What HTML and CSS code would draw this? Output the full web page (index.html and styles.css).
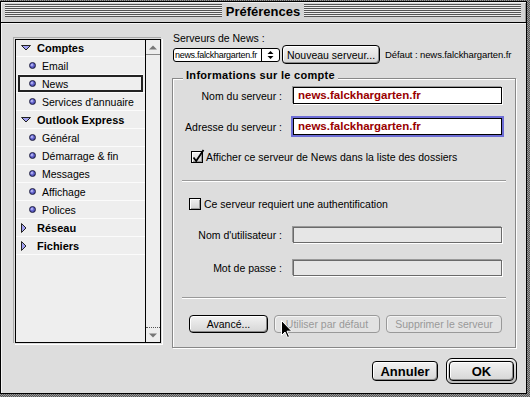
FILE: index.html
```html
<!DOCTYPE html>
<html lang="fr">
<head>
<meta charset="utf-8">
<title>Préférences</title>
<link rel="stylesheet" href="styles.css">
</head>
<body>
<div class="window">
  <div class="titlebar">
    <span class="stripes"></span>
    <span class="title">Préférences</span>
    <span class="stripes"></span>
  </div>
  <div class="content">
    <div class="main">
      <div class="list">
        <div class="items">
          <div class="items-inner">
            <div class="row cat"><svg class="tri" width="10" height="10" viewBox="0 0 10 10"><polygon points="0.5,2.5 9.5,2.5 5,7" fill="#a0a0f0" stroke="#222" stroke-width="1"/></svg><span>Comptes</span></div>
            <div class="row child"><span class="dot"></span><span>Email</span></div>
            <div class="row child sel"><span class="dot"></span><span>News</span></div>
            <div class="row child"><span class="dot"></span><span>Services d'annuaire</span></div>
            <div class="row cat"><svg class="tri" width="10" height="10" viewBox="0 0 10 10"><polygon points="0.5,2.5 9.5,2.5 5,7" fill="#a0a0f0" stroke="#222" stroke-width="1"/></svg><span>Outlook Express</span></div>
            <div class="row child"><span class="dot"></span><span>Général</span></div>
            <div class="row child"><span class="dot"></span><span>Démarrage &amp; fin</span></div>
            <div class="row child"><span class="dot"></span><span>Messages</span></div>
            <div class="row child"><span class="dot"></span><span>Affichage</span></div>
            <div class="row child"><span class="dot"></span><span>Polices</span></div>
            <div class="row cat"><svg class="tri" width="10" height="10" viewBox="0 0 10 10"><polygon points="0.5,0.5 5,5 0.5,9.5" fill="#a0a0f0" stroke="#222" stroke-width="1"/></svg><span>Réseau</span></div>
            <div class="row cat"><svg class="tri" width="10" height="10" viewBox="0 0 10 10"><polygon points="0.5,0.5 5,5 0.5,9.5" fill="#a0a0f0" stroke="#222" stroke-width="1"/></svg><span>Fichiers</span></div>
            <div class="row empty"></div>
          </div>
        </div>
        <div class="scrollbar">
          <div class="arrow up"><svg width="8" height="5" viewBox="0 0 8 5"><polygon points="0,4.5 4,0.5 8,4.5" fill="#777"/></svg></div>
          <div class="track"></div>
          <div class="arrow down"><svg width="8" height="5" viewBox="0 0 8 5"><polygon points="0,0.5 8,0.5 4,4.5" fill="#777"/></svg></div>
        </div>
      </div>

      <div class="right">
        <div class="label-top">Serveurs de News :</div>
        <div class="server-row">
          <div class="popup">
            <span class="popup-text">news.falckhargarten.fr</span>
            <span class="popup-arrows"><svg width="7" height="10" viewBox="0 0 7 10"><polygon points="0.5,4 3.5,1 6.5,4" fill="#000"/><polygon points="0.5,6 6.5,6 3.5,9" fill="#000"/></svg></span>
          </div>
          <button class="btn btn-new">Nouveau serveur...</button>
          <span class="default">Défaut : news.falckhargarten.fr</span>
        </div>

        <div class="group">
          <div class="group-title">Informations sur le compte</div>

          <div class="frow first">
            <span class="flabel">Nom du serveur :</span>
            <div class="field">news.falckhargarten.fr</div>
          </div>
          <div class="frow second">
            <span class="flabel">Adresse du serveur :</span>
            <div class="field focus">news.falckhargarten.fr</div>
          </div>

          <div class="check-row c1">
            <span class="checkbox"><svg class="tick" width="14" height="14" viewBox="0 0 14 14"><path d="M2.5 6.5 L5.2 10 L12.5 -1" fill="none" stroke="#000" stroke-width="1.8"/></svg></span>
            <span>Afficher ce serveur de News dans la liste des dossiers</span>
          </div>

          <div class="sep s1"></div>

          <div class="check-row c2">
            <span class="checkbox"></span>
            <span>Ce serveur requiert une authentification</span>
          </div>

          <div class="frow third">
            <span class="flabel">Nom d'utilisateur :</span>
            <div class="field disabled"></div>
          </div>
          <div class="frow fourth">
            <span class="flabel">Mot de passe :</span>
            <div class="field disabled"></div>
          </div>

          <div class="sep s2"></div>

          <div class="btn-row">
            <button class="btn b-adv">Avancé...</button>
            <button class="btn b-def off">Utiliser par défaut</button>
            <button class="btn b-del off">Supprimer le serveur</button>
          </div>
        </div>
      </div>
    </div>

    <div class="footer">
      <button class="btn big b-cancel">Annuler</button>
      <div class="default-ring"><button class="btn big b-ok">OK</button></div>
    </div>
  </div>

  <svg class="cursor" width="12" height="19" viewBox="0 0 12 19"><path d="M0.5 0.5 L0.5 15.5 L4 12 L6.5 17.5 L8.5 16.6 L6 11.2 L10.8 11.2 Z" fill="#000" stroke="#fff" stroke-width="1"/></svg>
</div>
</body>
</html>
```

FILE: styles.css
```css
html, body {
  margin: 0;
  padding: 0;
}
body {
  width: 530px;
  height: 397px;
  overflow: hidden;
  background: repeating-conic-gradient(#555 0 25%, #9a9a9a 0 50%) 0 0 / 2px 2px;
}
.window {
  position: relative;
  margin-top: 1px;
  width: 527px;
  height: 393px;
  box-sizing: border-box;
  border: 1px solid #000;
  background: #dddddd;
  display: flex;
  flex-direction: column;
  font-family: "Liberation Sans", Arial, sans-serif;
  font-size: 10.5px;
  color: #000;
}

/* title bar */
.titlebar {
  height: 21px;
  box-sizing: border-box;
  border-bottom: 1px solid #000;
  display: flex;
  align-items: flex-start;
  padding: 2px 5px 0 4px;
  background: #d4d4d4;
  box-shadow: inset 1px 1px 0 #f2f2f2, inset -1px 0 0 #999;
}
.stripes {
  flex: 1;
  height: 13px;
  background: repeating-linear-gradient(to bottom, #555 0 1px, #eeeeee 1px 2px);
}
.title {
  font-weight: bold;
  font-size: 13px;
  line-height: 15px;
  padding: 0 4px;
}

/* content */
.content {
  flex: 1;
  box-shadow: inset 1px 1px 0 #f4f4f4;
  padding: 9px 9px 0 14px;
}
.main {
  display: grid;
  grid-template-columns: 146px 344px;
  column-gap: 11px;
}

/* list */
.list {
  margin-top: 7px;
  height: 304px;
  box-sizing: border-box;
  border: 1px solid #000;
  display: flex;
  background: #eeeeee;
  box-shadow: 0 0 0 1px #dddddd, 1px 1px 0 1px #ffffff, -1px -1px 0 1px #aaaaaa;
}
.items {
  flex: 1;
  overflow: hidden;
}
.items-inner {
  margin-top: -2px;
}
.row {
  height: 17px;
  border-top: 1px solid #fbfbfb;
  display: flex;
  align-items: center;
  white-space: nowrap;
}
.row.cat {
  padding-left: 5px;
  font-weight: bold;
  font-size: 11px;
}
.row.cat .tri {
  margin-right: 6px;
  flex: none;
}
.row.child {
  padding-left: 13px;
}
.row.sel {
  margin: 0 2px;
  padding-left: 11px;
  box-shadow: inset 0 0 0 2px #222;
}
.dot {
  width: 7px;
  height: 7px;
  box-sizing: border-box;
  border-radius: 50%;
  border: 1px solid #1a1a40;
  background: radial-gradient(circle at 38% 38%, #dcdcff 0, #7070d8 35%, #2c2c88 100%);
  margin-right: 6px;
  flex: none;
}
.scrollbar {
  width: 14px;
  border-left: 1px solid #000;
  display: flex;
  flex-direction: column;
  background: #eeeeee;
}
.arrow {
  height: 14px;
  display: flex;
  align-items: center;
  justify-content: center;
}
.arrow.up {
  border-bottom: 1px solid #888;
}
.arrow.down {
  border-top: 1px dotted #555;
}
.track {
  flex: 1;
}

/* right column */
.label-top {
  height: 12px;
  line-height: 12px;
  padding-left: 1px;
}
.server-row {
  margin-top: 1px;
  height: 19px;
  display: flex;
  align-items: center;
  white-space: nowrap;
}
.popup {
  margin-left: 1px;
  width: 107px;
  height: 14px;
  box-sizing: border-box;
  border: 1px solid #000;
  border-radius: 3px;
  background: #fff;
  display: flex;
  align-items: stretch;
  font-size: 9px;
  letter-spacing: -0.3px;
}
.popup-text {
  flex: 1;
  padding-left: 1px;
  line-height: 12px;
  overflow: hidden;
}
.popup-arrows {
  width: 17px;
  border-left: 1px solid #000;
  display: flex;
  align-items: center;
  justify-content: center;
}
.default {
  margin-left: 5px;
  font-size: 9.5px;
  letter-spacing: -0.1px;
}

.btn {
  font-family: "Liberation Sans", Arial, sans-serif;
  font-size: 10.5px;
  color: #000;
  padding: 0;
  margin: 0;
  box-sizing: border-box;
  border: 1px solid #000;
  border-radius: 4px;
  background: linear-gradient(#f2f2f2, #d6d6d6);
  box-shadow: inset 1px 1px 0 #fff, inset -1px -1px 0 #8a8a8a;
  text-align: center;
  white-space: nowrap;
}
.btn-new {
  margin-left: 2px;
  width: 98px;
  height: 19px;
}
.btn.off {
  color: #999;
  border-color: #999;
  box-shadow: inset 1px 1px 0 #f4f4f4;
  background: #e2e2e2;
}

/* group box */
.group {
  margin-top: 14px;
  border: 1px solid #888;
  box-shadow: inset 1px 1px 0 #fff, 1px 1px 0 #fff;
  padding-bottom: 14px;
}
.group-title {
  margin: -10px 0 0 10px;
  padding: 0 3px;
  width: max-content;
  background: #dddddd;
  line-height: 12px;
  font-weight: bold;
  font-size: 11px;
  letter-spacing: 0.3px;
}
.frow {
  display: grid;
  grid-template-columns: 109px 209px;
  column-gap: 11px;
  align-items: center;
}
.flabel {
  text-align: right;
  white-space: nowrap;
}
.frow.first { margin-top: 6px; }
.frow.second { margin-top: 14px; }
.frow.third { margin-top: 17px; }
.frow.fourth { margin-top: 17px; }
.field {
  height: 17px;
  box-sizing: border-box;
  border: 1px solid #000;
  background: #fff;
  box-shadow: 1px 1px 0 #fff, -1px -1px 0 #999;
  color: #990000;
  font-weight: bold;
  font-size: 11.5px;
  line-height: 15px;
  padding-left: 4px;
}
.field.focus {
  box-shadow: 0 0 0 2px #6d6dd6;
}
.field.disabled {
  height: 16px;
  border-color: #6a6a6a;
  background: #e6e6e6;
}
.check-row {
  height: 12px;
  display: flex;
  align-items: center;
  white-space: nowrap;
}
.check-row.c1 { margin-top: 16px; padding-left: 18px; }
.check-row.c2 { margin-top: 16px; padding-left: 16px; }
.checkbox {
  position: relative;
  width: 12px;
  height: 12px;
  box-sizing: border-box;
  border: 1px solid #000;
  background: linear-gradient(#f0f0f0, #d4d4d4);
  box-shadow: inset 1px 1px 0 #fff, inset -1px -1px 0 #999;
  margin-right: 3px;
  flex: none;
}
.tick {
  position: absolute;
  left: -1px;
  top: -1px;
  overflow: visible;
}
.sep {
  height: 2px;
  box-sizing: border-box;
  border-top: 1px solid #999;
  border-bottom: 1px solid #fff;
  margin: 0 9px;
}
.sep.s1 { margin-top: 17px; }
.sep.s2 { margin-top: 21px; }
.btn-row {
  margin-top: 16px;
  padding-left: 16px;
  display: flex;
  gap: 6px;
}
.btn-row .btn { height: 18px; }
.b-adv { width: 79px; }
.b-def { width: 106px; }
.b-del { width: 116px; }

/* footer */
.footer {
  margin-top: 10px;
  display: flex;
  justify-content: flex-end;
  align-items: center;
  gap: 8px;
}
.btn.big {
  font-weight: bold;
  font-size: 13px;
}
.b-cancel {
  width: 66px;
  height: 20px;
}
.default-ring {
  width: 71px;
  height: 26px;
  box-sizing: border-box;
  border: 1px solid #000;
  border-radius: 6px;
  padding: 2px;
  background: linear-gradient(#e8e8e8, #bdbdbd);
  box-shadow: inset 1px 1px 0 #fff;
}
.b-ok {
  width: 100%;
  height: 100%;
}

.cursor {
  position: absolute;
  left: 280px;
  top: 318px;
}
```
